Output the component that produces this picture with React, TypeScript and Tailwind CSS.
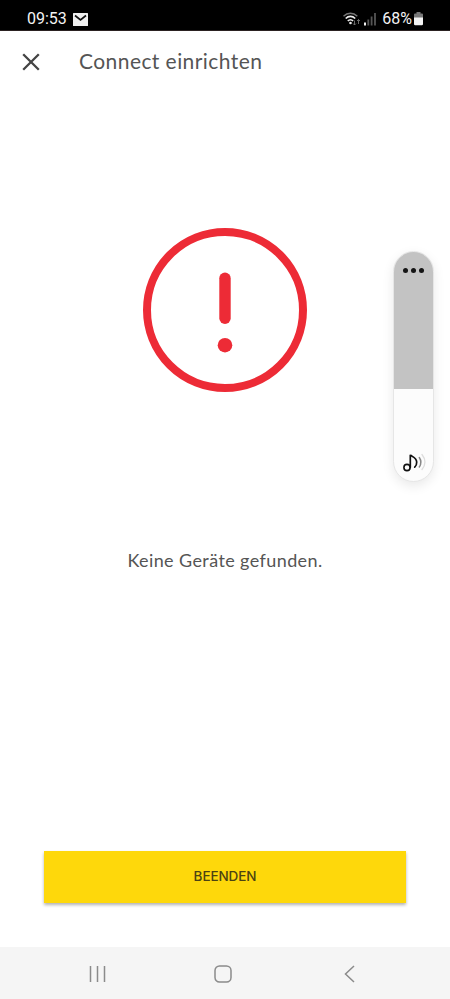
import React from 'react';

const StatusBar: React.FC = () => (
  <div className="flex h-[31px] shrink-0 items-center border-b border-[#2b2222] bg-black pt-[8px] pr-[27px] pl-[27px] text-[#f4f4f4]">
    <span className="font-[Roboto,sans-serif] text-[16px] leading-6">09:53</span>
    <svg className="ml-[6px] h-[13px] w-[15px]" viewBox="0 0 15 13">
      <rect width="15" height="13" rx="0.5" fill="#f0f0f0" />
      <path d="M2 2.5 7.5 7 13 2.5" fill="none" stroke="#111" strokeWidth="1.7" />
    </svg>
    <div className="ml-auto flex items-center">
      <svg className="h-[16px] w-[34px]" viewBox="343 11 34 16" fill="none">
        <path d="M343.5 16.2c4-4 9.8-4 13.8 0" stroke="#777" strokeWidth="1.4" />
        <path d="M345.7 18.5c2.8-2.9 6.7-2.9 9.5 0" stroke="#eee" strokeWidth="1.6" />
        <path d="M347.8 21c1.6-1.7 3.7-1.7 5.3 0" stroke="#eee" strokeWidth="1.6" />
        <circle cx="350.5" cy="23" r="1.3" fill="#eee" />
        <path d="M354.5 20.5v4.5M353 23.500l1.5 1.5 1.5-1.5M358.500 24v-4.500M357 21l1.500-1.500 1.500 1.500" stroke="#777" strokeWidth="0.9" />
        <path d="M365 22.500V25.500" stroke="#f0f0f0" strokeWidth="2" />
        <path d="M368.300 19.500v6M371.600 16.500v9M375 13v12.500" stroke="#555" strokeWidth="1.8" />
      </svg>
      <span className="ml-[5px] font-[Roboto,sans-serif] text-[16px] leading-6">68%</span>
      <svg className="ml-[2px] h-[14px] w-[9px]" viewBox="0 0 9 14">
        <path d="M2.5 0h4v1.5H8a1 1 0 0 1 1 1V6H0V2.5a1 1 0 0 1 1-1h1.5z" fill="#777" />
        <path d="M0 5.5h9V12a1.2 1.2 0 0 1-1.2 1.2H1.2A1.2 1.2 0 0 1 0 12z" fill="#f4f4f4" />
      </svg>
    </div>
  </div>
);

const Header: React.FC = () => (
  <header className="flex h-[61px] shrink-0 items-center pl-[22px]">
    <button type="button" aria-label="Schließen">
      <svg className="h-[18px] w-[18px]" viewBox="0 0 18 18" fill="none" stroke="#444" strokeWidth="2.3">
        <path d="M1.2 1.2 16.8 16.8M16.8 1.2 1.2 16.8" />
      </svg>
    </button>
    <h1 className="ml-[39px] pb-[2px] font-[Lato,sans-serif] text-[21px] leading-7 tracking-[0.43px] text-[#555]">
      Connect einrichten
    </h1>
  </header>
);

const VolumePanel: React.FC = () => (
  <div className="absolute top-[251px] left-[393px] flex h-[231px] w-[41px] flex-col overflow-hidden rounded-full border border-[#e6e6e6] bg-[#fcfcfc] shadow-[0_4px_12px_rgba(0,0,0,0.09)]">
    <div className="flex h-[137px] justify-center gap-[3px] bg-[#c3c3c3] pt-[16px]">
      <span className="h-[5px] w-[5px] rounded-full bg-[#151515]" />
      <span className="h-[5px] w-[5px] rounded-full bg-[#151515]" />
      <span className="h-[5px] w-[5px] rounded-full bg-[#151515]" />
    </div>
    <svg className="mt-auto mb-[8px] ml-[9px] h-[20px] w-[24px] shrink-0" viewBox="403 453 24 20" fill="none" strokeLinecap="round">
      <circle cx="407" cy="467.5" r="3.1" stroke="#111" strokeWidth="1.6" />
      <path d="M410.3 467.3V454.800c.5 1.500 6.200 2 6.400 7.200.1 2.300-.7 4-2 5.200" stroke="#111" strokeWidth="1.7" />
      <path d="M419.300 457.500c2 3 2 6.500 0 9.500" stroke="#888" strokeWidth="1.5" />
      <path d="M422 454.500c3.700 4.700 3.700 10.300 0 15" stroke="#ddd" strokeWidth="1.3" />
    </svg>
  </div>
);

const NavigationBar: React.FC = () => (
  <nav className="flex h-[52px] shrink-0 items-center bg-[#f5f5f5] pt-px pl-[89px]">
    <svg className="h-[18px] w-[17px]" viewBox="0 0 17 18" fill="none" stroke="#8b8b8b" strokeWidth="1.5">
      <path d="M1.5 1v16M8.5 1v16M15.5 1v16" />
    </svg>
    <svg className="ml-[108px] h-[18px] w-[18px]" viewBox="0 0 18 18" fill="none" stroke="#8b8b8b" strokeWidth="1.5">
      <rect x="1" y="1" width="16" height="16" rx="4.5" />
    </svg>
    <svg className="ml-[112px] h-[18px] w-[11px]" viewBox="0 0 11 18" fill="none" stroke="#8b8b8b" strokeWidth="1.5">
      <path d="M10 1 1.5 9 10 17" />
    </svg>
  </nav>
);

export default function App() {
  return (
    <div className="relative flex h-[999px] w-[450px] flex-col overflow-hidden bg-white">
      <StatusBar />
      <Header />
      <main className="flex flex-1 flex-col items-center px-[44px] pt-[136px] pb-[44px]">
        <svg className="h-[164px] w-[164px]" viewBox="0 0 164 164">
          <circle cx="82" cy="82" r="78" fill="none" stroke="#ed2b36" strokeWidth="8" />
          <rect x="76.3" y="44.5" width="11.4" height="51.5" rx="5.7" fill="#ed2b36" />
          <circle cx="82" cy="117.2" r="7.3" fill="#ed2b36" />
        </svg>
        <p className="mt-[154px] font-[Lato,sans-serif] text-[18px] leading-7 tracking-[0.4px] text-[#555]">
          Keine Geräte gefunden.
        </p>
        <button
          type="button"
          className="mt-auto h-[52px] w-full bg-[#fed80b] pb-[2px] font-[Inter,sans-serif] text-[13.5px] font-medium tracking-[-0.1px] text-[#4c4212] shadow-[0_2px_3px_rgba(0,0,0,0.3)]"
        >
          BEENDEN
        </button>
      </main>
      <NavigationBar />
      <VolumePanel />
    </div>
  );
}
